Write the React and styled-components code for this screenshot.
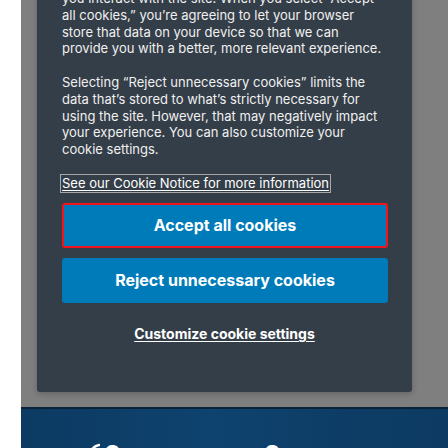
import React from "react";
import styled, { createGlobalStyle } from "styled-components";

const Global = createGlobalStyle`
  html, body { margin: 0; padding: 0; background: #ffffff; overflow: hidden; }
  #root { width: 448px; height: 448px; overflow: hidden; }
`;

const Page = styled.div`
  width: 448px;
  height: 448px;
  display: grid;
  grid-template-columns: 21px 1fr;
  grid-template-rows: 448px;
  overflow: hidden;
  font-family: Inter, "Liberation Sans", Arial, sans-serif;
`;

const Gutter = styled.div`
  background: #ffffff;
`;

const Main = styled.div`
  display: flex;
  flex-direction: column;
  min-width: 0;
  min-height: 0;
  overflow: hidden;
`;

const Overlay = styled.div`
  height: 407px;
  flex: none;
  background: #7f7f7f;
  display: flex;
  flex-direction: column;
  justify-content: flex-end;
  padding: 0 0 15px 16px;
  box-sizing: border-box;
  overflow: hidden;
`;

const Dialog = styled.div`
  flex: none;
  width: 375px;
  box-sizing: border-box;
  background: #343e48;
  border-radius: 3px;
  padding: 0 24px 50px 25px;
  display: flex;
  flex-direction: column;
  box-shadow: 0 2px 6px rgba(0, 0, 0, 0.22);
`;

const Para = styled.p`
  margin: 0 0 ${(p) => p.$after}px;
  color: #f0f0f0;
  font-size: 13px;
  line-height: 16.8px;
`;

const NoticeLink = styled.a`
  align-self: flex-start;
  margin: 0 0 10px -2px;
  padding: 0 1px;
  border: 1px solid #a8a8a8;
  color: #ffffff;
  font-size: 13px;
  line-height: 17px;
  text-decoration: underline;
  text-underline-offset: 2px;
`;

const Button = styled.button`
  flex: none;
  height: 45px;
  width: 326px;
  box-sizing: border-box;
  margin-bottom: ${(p) => p.$after}px;
  border: ${(p) => (p.$focused ? "2px solid #f2141c" : "none")};
  border-radius: 3px;
  background: #007bb9;
  color: #ffffff;
  font-family: inherit;
  font-size: 16px;
  font-weight: 700;
  line-height: 20px;
  padding: 0;
  cursor: pointer;
`;

const Customize = styled.a`
  align-self: center;
  color: #ffffff;
  font-size: 14px;
  font-weight: 700;
  line-height: 17px;
  text-decoration: underline;
  text-underline-offset: 2px;
  margin-left: -1px;
`;

const Rule = styled.div`
  height: 2px;
  flex: none;
  background: #0a2238;
`;

const Hero = styled.div`
  flex: 1;
  background: linear-gradient(90deg, #0c3a62 0%, #0e436f 45%, #0d3d66 75%, #0c3a62 100%);
  padding: 33px 0 0 67px;
  overflow: hidden;
`;

const Brand = styled.div`
  display: flex;
  align-items: flex-start;
  gap: 4px;
  color: #ffffff;
`;

const BrandName = styled.span`
  font-family: Inter, "Liberation Sans", Arial, sans-serif;
  font-size: 22px;
  font-weight: 700;
  line-height: 22px;
  white-space: nowrap;
  letter-spacing: 1px;
`;

const Reg = styled.sup`
  font-size: 9px;
  font-weight: 400;
  vertical-align: top;
  margin-left: 2px;
`;

export default function App() {
  return (
    <>
      <Global />
      <Page>
        <Gutter />
        <Main>
          <Overlay>
            <Dialog>
              <Para $after={16.8}>
                We use cookies and similar technologies to collect data about how
                <br />
                you interact with the site. When you select “Accept all cookies,”
                you’re agreeing to let your browser store that data on your device
                so that we can provide you with a better, more relevant experience.
              </Para>
              <Para $after={15.6}>
                Selecting “Reject unnecessary cookies” limits the data that’s
                stored to what’s strictly necessary for using the site. However,
                that may negatively impact your experience. You can also customize
                your cookie settings.
              </Para>
              <NoticeLink href="#">See our Cookie Notice for more information</NoticeLink>
              <Button $focused $after={10}>Accept all cookies</Button>
              <Button $after={22.5}>Reject unnecessary cookies</Button>
              <Customize href="#">Customize cookie settings</Customize>
            </Dialog>
          </Overlay>
          <Rule />
          <Hero>
            <Brand>
              <svg width="12" height="20" viewBox="0 0 12 20" aria-hidden="true">
                <path d="M11 3 C6 4 2 8 1.5 16" fill="none" stroke="#ffffff" strokeWidth="2.6" strokeLinecap="round" />
              </svg>
              <BrandName>
                Genome care Co.<Reg>®</Reg>
              </BrandName>
            </Brand>
          </Hero>
        </Main>
      </Page>
    </>
  );
}
